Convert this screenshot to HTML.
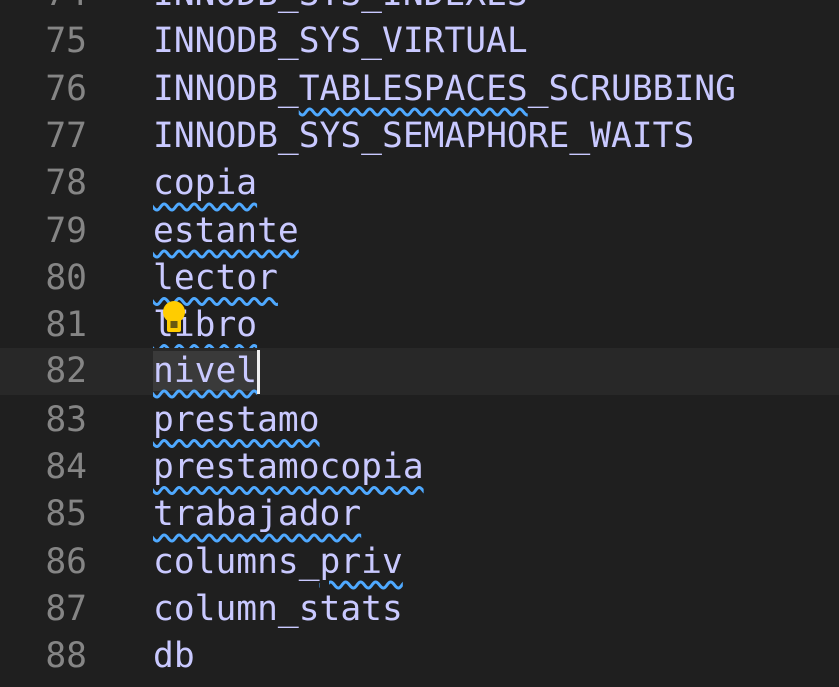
<!DOCTYPE html><html><head><style>
body{margin:0;width:839px;height:687px;background:#1f1f1f;overflow:hidden;position:relative;font-family:"DejaVu Sans Mono","Liberation Mono",monospace;font-size:34.6px}
.l{position:absolute;left:0;width:839px;height:47.3px;line-height:47.3px;white-space:pre;margin-top:2px}
.n{position:absolute;right:752px;color:#858585}
.t{position:absolute;left:153px;color:#c9c9ff}
.s{text-decoration:underline wavy #4fa9ff;text-decoration-thickness:2.5px;text-underline-offset:8px}
.cur{background:#282828}
.sel{background:#3a3a3a}
</style></head><body>
<div class="l" style="top:-31px"><span class="n">74</span><span class="t">INNODB_SYS_INDEXES</span></div>
<div class="l" style="top:16.4px"><span class="n">75</span><span class="t">INNODB_SYS_VIRTUAL</span></div>
<div class="l" style="top:63.7px"><span class="n">76</span><span class="t">INNODB_<span class="s">TABLESPACES</span>_SCRUBBING</span></div>
<div class="l" style="top:111px"><span class="n">77</span><span class="t">INNODB_SYS_SEMAPHORE_WAITS</span></div>
<div class="l" style="top:158.3px"><span class="n">78</span><span class="t"><span class="s">copia</span></span></div>
<div class="l" style="top:205.6px"><span class="n">79</span><span class="t"><span class="s">estante</span></span></div>
<div class="l" style="top:252.9px"><span class="n">80</span><span class="t"><span class="s">lector</span></span></div>
<div class="l" style="top:300.2px"><span class="n">81</span><span class="t"><span class="s">libro</span></span></div>
<div class="l cur" style="top:345.5px"><span class="n">82</span><span class="t"><span class="s sel">nivel</span><span style="display:inline-block;width:3px;height:44px;background:#f0f0f0;vertical-align:middle"></span></span></div>
<div class="l" style="top:394.8px"><span class="n">83</span><span class="t"><span class="s">prestamo</span></span></div>
<div class="l" style="top:442.1px"><span class="n">84</span><span class="t"><span class="s">prestamocopia</span></span></div>
<div class="l" style="top:489.4px"><span class="n">85</span><span class="t"><span class="s">trabajador</span></span></div>
<div class="l" style="top:536.7px"><span class="n">86</span><span class="t">columns_<span class="s">priv</span></span></div>
<div class="l" style="top:584px"><span class="n">87</span><span class="t">column_stats</span></div>
<div class="l" style="top:631.3px"><span class="n">88</span><span class="t">db</span></div>
<svg style="position:absolute;left:158px;top:298px" width="32" height="38" viewBox="0 0 32 38">
<circle cx="16" cy="14" r="11" fill="#ffcc00"/>
<rect x="9" y="18" width="14" height="16" rx="2" fill="#ffcc00"/>
<rect x="12.5" y="23" width="7" height="7" fill="#6b5a10"/>
</svg>
</body></html>
